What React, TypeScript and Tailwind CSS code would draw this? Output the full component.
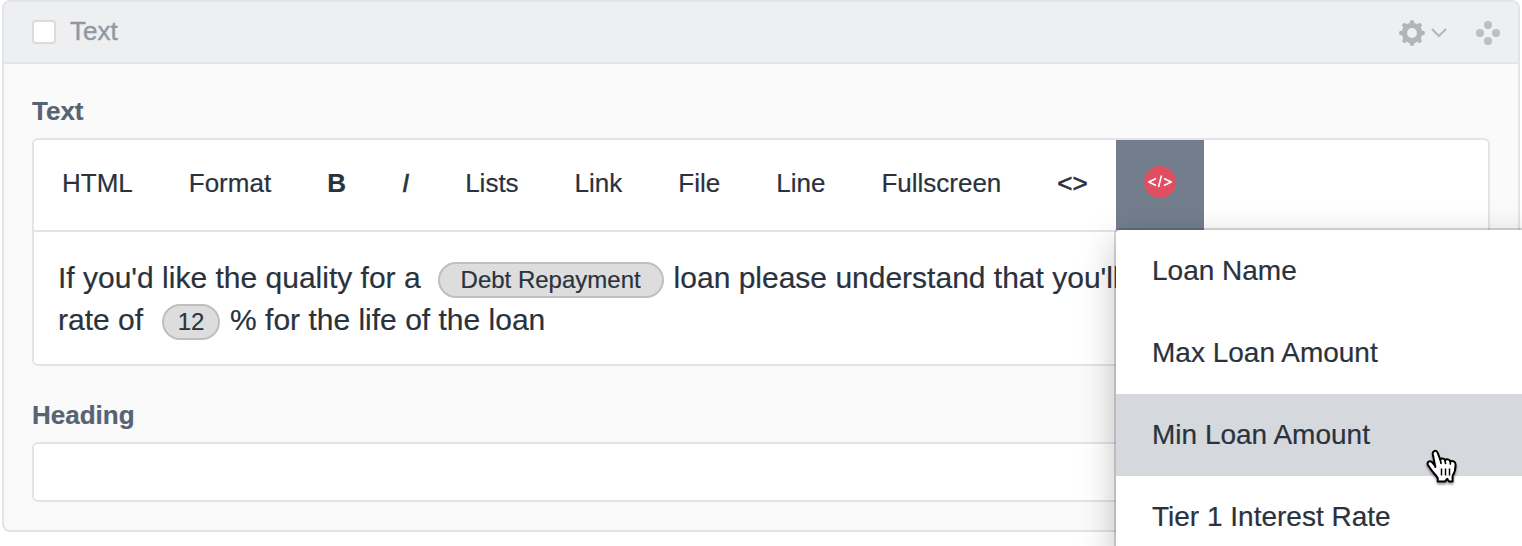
import React from "react";

const tools: { label: string; className?: string }[] = [
  { label: "HTML" },
  { label: "Format" },
  { label: "B", className: "font-bold" },
  { label: "I", className: "italic [-webkit-text-stroke:0.5px]" },
  { label: "Lists" },
  { label: "Link" },
  { label: "File" },
  { label: "Line" },
  { label: "Fullscreen" },
  { label: "<>", className: "[-webkit-text-stroke:0.6px]" },
];

const options = ["Loan Name", "Max Loan Amount", "Min Loan Amount", "Tier 1 Interest Rate"];

function Gear() {
  return (
    <svg className="h-[28px] w-[28px]" viewBox="0 0 28 28" fill="none" stroke="#b3b5b6">
      <circle cx="14" cy="14" r="7.6" strokeWidth="5.4" />
      {[0, 45, 90, 135].map((a) => (
        <path key={a} d="M14 3.300v2.600M14 22.100v2.600" strokeWidth="4.600" strokeLinecap="round" transform={`rotate(${a} 14 14)`} />
      ))}
    </svg>
  );
}

function Hand() {
  return (
    <svg
      className="absolute left-[309px] top-[218px] h-[38px] w-[36px] drop-shadow-[0_2px_1px_rgba(0,0,0,0.4)]"
      viewBox="0 0 36 38"
      fill="#fff"
      stroke="#000"
      strokeWidth="2"
      strokeLinejoin="round"
      strokeLinecap="round"
    >
      <path d="M10.300 19L7.800 6.200C7.200 2.500 11.500 1.700 12.700 4.800L15.200 11.500C16.500 10 19.300 10.200 20 12.300C21.500 10.600 24.700 11.200 25.300 13.300C27.500 12.300 30.600 13.500 30.600 17C30.600 22 29.800 24.500 27.600 28V33.500H24L22.200 30.800L20 33.500H12.700V30C10.500 26.500 7.600 24.300 5.500 20.800L2.900 17C1.500 14 4.800 12 7.200 14.300L10.300 18Z" />
      <path d="M15.200 11.500l.8 3.800M20 12.300l.5 3M25.300 13.300v2.600" strokeWidth="1.700" />
      <path d="M16.500 20.500v7M20.500 20.500v7M24.500 20.500v7" strokeWidth="1.500" strokeLinecap="butt" />
    </svg>
  );
}

function Pill({ width, children }: { width: string; children: React.ReactNode }) {
  return (
    <span
      className={`${width} mt-[5px] flex h-9 items-center justify-center rounded-full border-2 border-[#bfbfbf] bg-[#dddddd] text-[24px] leading-none`}
    >
      {children}
    </span>
  );
}

export default function App() {
  return (
    <div className="relative h-[546px] w-[1522px] overflow-hidden bg-white font-['Liberation_Sans',Arial,sans-serif] text-[#29323d] [-webkit-text-stroke:0.2px]">
      <div className="ml-[2px] h-[532px] w-[1518px] overflow-hidden rounded-[8px] border-2 border-[#e3e4e8] bg-[#fafafa]">
        <header className="flex h-[62px] items-center border-b-2 border-[#e3e4e8] bg-[#eeeff1] pl-7 pr-[17px]">
          <span className="h-6 w-6 rounded-[4px] border-2 border-[#dadbdb] bg-white" />
          <span className="ml-[14px] pb-[2px] text-[26px] leading-none text-[#8f98a3] [-webkit-text-stroke:0.4px]">Text</span>
          <div className="ml-auto flex items-center pt-[2px]">
            <Gear />
            <svg className="ml-[4px] h-3 w-[18px]" viewBox="0 0 18 12" fill="none" stroke="#b3b5b6" strokeWidth="2">
              <path d="M2 2L9 9L16 2" />
            </svg>
            <svg className="ml-[27px] h-[26px] w-[26px]" viewBox="0 0 26 26" fill="#bcbebf">
              <circle cx="13" cy="5" r="4" />
              <circle cx="5" cy="13" r="4" />
              <circle cx="21" cy="13" r="4" />
              <circle cx="13" cy="21" r="4" />
            </svg>
          </div>
        </header>

        <div className="px-7 pt-8">
          <h2 className="h-[42px] text-[26px] font-bold leading-[30px] text-[#566373]">Text</h2>
          <div className="h-[228px] rounded-[6px] border-2 border-[#e3e4e8] bg-white">
            <div className="flex h-[92px] border-b-2 border-[#e3e4e8]">
              {tools.map((t) => (
                <button key={t.label} className="px-7 pb-1 text-[26px] leading-[30px]">
                  <span className={t.className}>{t.label}</span>
                </button>
              ))}
              <button className="flex h-[90px] w-[88px] items-center justify-center bg-[#727e8c] pb-[6px]">
                <span className="flex h-8 w-8 items-center justify-center rounded-full bg-[#e04f61]">
                  <svg className="h-4 w-6" viewBox="0 0 24 16" fill="none" stroke="#fff" strokeWidth="1.6">
                    <path d="M8 4.500L1 8L8 11.500M16 4.500L23 8L16 11.500M13.500 1.500L10.500 13" />
                  </svg>
                </span>
              </button>
            </div>
            <div className="whitespace-nowrap pl-6 pt-[25px] text-[30px] leading-[42px]">
              <p className="flex h-[42px]">
                <span className="mr-[17px]">If you'd like the quality for a</span>
                <Pill width="w-[226px]">Debt Repayment</Pill>
                <span className="ml-[10px]">loan please understand that you'll</span>
              </p>
              <p className="flex h-[42px]">
                <span className="mr-[19px]">rate of</span>
                <Pill width="w-[58px]">12</Pill>
                <span className="ml-[10px]">% for the life of the loan</span>
              </p>
            </div>
          </div>
          <h2 className="mt-[34px] h-[42px] text-[26px] font-bold leading-[30px] text-[#566373]">Heading</h2>
          <div className="h-[60px] rounded-[6px] border-2 border-[#e3e4e8] bg-white" />
        </div>
      </div>

      <div className="absolute left-[1116px] top-[230px] w-[440px] rounded-tl-[4px] bg-white shadow-[0_0_0_2px_rgba(0,0,0,0.15),0_12px_36px_rgba(0,0,0,0.25)]">
        {options.map((o) => (
          <div
            key={o}
            className={
              o === "Min Loan Amount"
                ? "h-[82px] bg-[#d5d8dd] pl-9 text-[28px] leading-[82px]"
                : "h-[82px] pl-9 text-[28px] leading-[82px]"
            }
          >
            {o}
          </div>
        ))}
        <Hand />
      </div>
    </div>
  );
}
